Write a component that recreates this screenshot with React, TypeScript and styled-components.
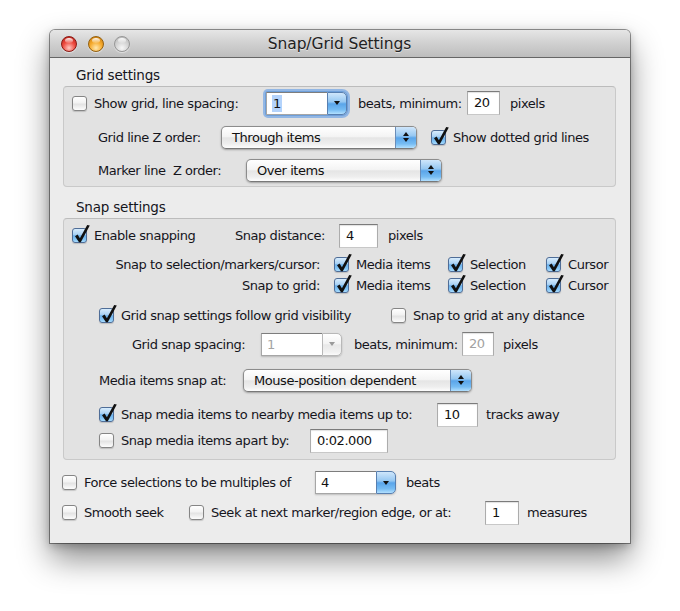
import React from 'react';
import styled, { createGlobalStyle, css } from 'styled-components';

const Global = createGlobalStyle`
  html, body { margin: 0; padding: 0; background: #ffffff; }
  body {
    font-family: "DejaVu Sans", "Liberation Sans", sans-serif;
    font-size: 13px;
    letter-spacing: -0.45px;
    color: #15151c;
  }
  * { box-sizing: border-box; }
`;

const Page = styled.div`
  width: 680px;
  height: 611px;
  padding: 30px 0 0 50px;
`;

const Window = styled.div`
  width: 580px;
  height: 513px;
  background: #ececec;
  border-radius: 5px 5px 0 0;
  box-shadow: 0 0 0 1px rgba(0, 0, 0, 0.4), 0 16px 32px rgba(0, 0, 0, 0.45),
    0 3px 10px rgba(0, 0, 0, 0.25);
  display: flex;
  flex-direction: column;
`;

const TitleBar = styled.div`
  height: 28px;
  flex-shrink: 0;
  display: grid;
  grid-template-columns: 1fr auto 1fr;
  align-items: center;
  padding-left: 11px;
  border-radius: 5px 5px 0 0;
  background: linear-gradient(#e6e6e6 0%, #d2d2d2 45%, #bdbdbd 100%);
  border-bottom: 1px solid #666666;
`;

const Lights = styled.div`
  display: flex;
  gap: 10.5px;
  align-items: center;
`;

const lightColors = {
  close: ['#ffc9c2', '#ee4b40', '#b01b12', '#8a1a14'],
  min: ['#ffe8b0', '#f6aa2c', '#c47508', '#94600f'],
  zoom: ['#f7f7f7', '#d4d4d4', '#b4b4b4', '#979797'],
};

const Light = styled.span<{ $kind: 'close' | 'min' | 'zoom' }>`
  position: relative;
  width: 16px;
  height: 16px;
  border-radius: 50%;
  ${({ $kind }) => {
    const c = lightColors[$kind];
    return css`
      background: radial-gradient(circle at 50% 78%, ${c[0]} 0%, ${c[1]} 48%, ${c[2]} 100%);
      border: 1px solid ${c[3]};
    `;
  }}
  box-shadow: 0 1px 1px rgba(255, 255, 255, 0.5);
  &::after {
    content: '';
    position: absolute;
    top: 1px;
    left: 3px;
    width: 8px;
    height: 5px;
    border-radius: 50%;
    background: linear-gradient(rgba(255, 255, 255, 0.95), rgba(255, 255, 255, 0.15));
  }
`;

const Title = styled.div`
  font-size: 15.5px;
  letter-spacing: -0.1px;
  color: #222222;
  text-shadow: 0 1px 0 rgba(255, 255, 255, 0.5);
  padding-right: 12px;
`;

const Group = styled.div`
  margin: 0 14px 0 13px;
`;

const GroupTitle = styled.div<{ $mt: number }>`
  margin-top: ${({ $mt }) => $mt}px;
  margin-bottom: 2px;
  padding-left: 13px;
  height: 18px;
  line-height: 18px;
  font-size: 13.5px;
  letter-spacing: -0.2px;
`;

const Box = styled.div<{ $h: number }>`
  height: ${({ $h }) => $h}px;
  background: #e2e2e2;
  border: 1px solid #c9c9c9;
  border-top-color: #bcbcbc;
  border-radius: 4px;
  display: flex;
  flex-direction: column;
`;

const Row = styled.div<{ $h: number; $mt: number; $pl: number }>`
  display: flex;
  align-items: center;
  flex-shrink: 0;
  height: ${({ $h }) => $h}px;
  margin-top: ${({ $mt }) => $mt}px;
  padding-left: ${({ $pl }) => $pl}px;
  white-space: pre;
`;

const Cell = styled.div<{ $w?: number; $ml?: number; $right?: boolean }>`
  display: flex;
  align-items: center;
  flex-shrink: 0;
  ${({ $w }) => ($w ? `width: ${$w}px;` : '')}
  margin-left: ${({ $ml }) => $ml ?? 0}px;
  justify-content: ${({ $right }) => ($right ? 'flex-end' : 'flex-start')};
`;

const Text = styled.span<{ $ml?: number }>`
  margin-left: ${({ $ml }) => $ml ?? 0}px;
  white-space: pre;
`;

/* ---------- checkbox ---------- */

const BoxMark = styled.span<{ $on: boolean }>`
  position: relative;
  flex-shrink: 0;
  width: 15px;
  height: 15px;
  border-radius: 3px;
  box-shadow: 0 1px 1px rgba(0, 0, 0, 0.16);
  ${({ $on }) =>
    $on
      ? css`
          border: 1px solid #4f6d97;
          background: linear-gradient(#d7ecfd 0%, #aad2f4 42%, #6cb1ec 52%, #83c5f6 80%, #a9dcfd 100%);
        `
      : css`
          border: 1px solid #858585;
          background: linear-gradient(#ffffff 0%, #f2f2f2 45%, #e3e3e3 55%, #f4f4f4 85%, #fcfcfc 100%);
        `}
`;

const Tick = styled.svg`
  position: absolute;
  left: 0;
  top: -5px;
  overflow: visible;
`;

const CheckLabel = styled.span`
  margin-left: 7px;
  white-space: pre;
`;

function Check({ on, label }: { on?: boolean; label?: string }) {
  return (
    <>
      <BoxMark $on={!!on}>
        {on && (
          <Tick width="17" height="19" viewBox="0 0 17 19">
            <path d="M2 12.2 L4.6 10.4 L6.9 14.2 L14.2 1 L16.8 1.6 L7.8 18.3 L6 18.3 Z" fill="#101010" />
          </Tick>
        )}
      </BoxMark>
      {label && <CheckLabel>{label}</CheckLabel>}
    </>
  );
}

/* ---------- text field ---------- */

const FieldBox = styled.div<{ $w: number; $disabled?: boolean }>`
  width: ${({ $w }) => $w}px;
  height: 24px;
  flex-shrink: 0;
  background: #ffffff;
  border: 1px solid #acacac;
  border-top-color: #7b7b7b;
  border-bottom-color: #c8c8c8;
  box-shadow: inset 0 1px 1px rgba(0, 0, 0, 0.12);
  padding-left: 6px;
  line-height: 22px;
  color: ${({ $disabled }) => ($disabled ? '#a2a2a2' : '#111')};
`;

/* ---------- popup button ---------- */

const PopupBox = styled.div<{ $w: number }>`
  width: ${({ $w }) => $w}px;
  height: 23px;
  flex-shrink: 0;
  display: flex;
  border: 1px solid #8c8c8c;
  border-bottom-color: #787878;
  border-radius: 5px;
  overflow: hidden;
  box-shadow: 0 1px 2px rgba(0, 0, 0, 0.3);
  background: linear-gradient(#ffffff 0%, #f4f4f4 45%, #e5e5e5 52%, #eeeeee 80%, #fdfdfd 100%);
`;

const PopupText = styled.div`
  flex: 1;
  padding-left: 10px;
  line-height: 21px;
  color: #111;
`;

const BlueCap = styled.div<{ $w: number; $grey?: boolean }>`
  width: ${({ $w }) => $w}px;
  flex-shrink: 0;
  display: flex;
  flex-direction: column;
  align-items: center;
  justify-content: center;
  gap: 2px;
  ${({ $grey }) =>
    $grey
      ? css`
          border-left: 1px solid #c2c2c2;
          background: linear-gradient(#ffffff 0%, #f4f4f4 45%, #e8e8e8 52%, #f1f1f1 85%, #fbfbfb 100%);
        `
      : css`
          border-left: 1px solid #6a8db8;
          background: linear-gradient(#cfe6fb 0%, #96c8f2 42%, #5aa5ea 52%, #76bcf3 80%, #b2e0ff 100%);
        `}
`;

const Arrow = styled.span<{ $up?: boolean; $grey?: boolean }>`
  width: 0;
  height: 0;
  border-left: 3.5px solid transparent;
  border-right: 3.5px solid transparent;
  ${({ $up, $grey }) =>
    $up
      ? `border-bottom: 4px solid ${$grey ? '#9a9a9a' : '#111'};`
      : `border-top: 4px solid ${$grey ? '#9a9a9a' : '#111'};`}
`;

function Popup({ w, value }: { w: number; value: string }) {
  return (
    <PopupBox $w={w}>
      <PopupText>{value}</PopupText>
      <BlueCap $w={21}>
        <Arrow $up />
        <Arrow />
      </BlueCap>
    </PopupBox>
  );
}

/* ---------- combo box ---------- */

const ComboBox = styled.div<{ $w: number; $focus?: boolean }>`
  width: ${({ $w }) => $w}px;
  height: 23px;
  flex-shrink: 0;
  display: flex;
  border-radius: 0 5px 5px 0;
  ${({ $focus }) =>
    $focus
      ? css`
          box-shadow: 0 0 0 1px #6e9fd9, 0 0 0 3px rgba(120, 168, 228, 0.75);
          border-radius: 2px 5px 5px 2px;
        `
      : css`
          box-shadow: 0 1px 2px rgba(0, 0, 0, 0.2);
        `}
`;

const ComboField = styled.div<{ $disabled?: boolean }>`
  flex: 1;
  background: #ffffff;
  border: 1px solid #a6a6a6;
  border-top-color: #7d7d7d;
  border-right: none;
  padding-left: 5px;
  line-height: 21px;
  color: ${({ $disabled }) => ($disabled ? '#a4a4a4' : '#111')};
`;

const Selected = styled.span`
  background: #b4d3fb;
  padding: 1px 1px;
`;

const ComboCap = styled(BlueCap)`
  border: 1px solid ${({ $grey }) => ($grey ? '#b8b8b8' : '#587fb0')};
  border-radius: 0 5px 5px 0;
`;

function Combo({ w, value, focus, disabled }: { w: number; value: string; focus?: boolean; disabled?: boolean }) {
  return (
    <ComboBox $w={w} $focus={focus}>
      <ComboField $disabled={disabled}>{focus ? <Selected>{value}</Selected> : value}</ComboField>
      <ComboCap $w={20} $grey={disabled}>
        <Arrow $grey={disabled} />
      </ComboCap>
    </ComboBox>
  );
}

/* ---------- page ---------- */

export default function App() {
  return (
    <>
      <Global />
      <Page>
        <Window>
          <TitleBar>
            <Lights>
              <Light $kind="close" />
              <Light $kind="min" />
              <Light $kind="zoom" />
            </Lights>
            <Title>Snap/Grid Settings</Title>
            <div />
          </TitleBar>

          <Group>
            <GroupTitle $mt={8}>Grid settings</GroupTitle>
            <Box $h={101}>
              <Row $h={26} $mt={3} $pl={8}>
                <Cell $w={194}>
                  <Check label="Show grid, line spacing:" />
                </Cell>
                <Combo w={81} value="1" focus />
                <Cell $w={109} $ml={11}>beats, minimum:</Cell>
                <FieldBox $w={33}>20</FieldBox>
                <Text $ml={10}>pixels</Text>
              </Row>
              <Row $h={26} $mt={8} $pl={34}>
                <Cell $w={123}>Grid line Z order:</Cell>
                <Popup w={196} value="Through items" />
                <Cell $ml={14}>
                  <Check on label="Show dotted grid lines" />
                </Cell>
              </Row>
              <Row $h={26} $mt={7} $pl={34}>
                <Cell $w={148}>Marker line  Z order:</Cell>
                <Popup w={196} value="Over items" />
              </Row>
            </Box>

            <GroupTitle $mt={11}>Snap settings</GroupTitle>
            <Box $h={242}>
              <Row $h={27} $mt={3} $pl={8}>
                <Cell $w={163}>
                  <Check on label="Enable snapping" />
                </Cell>
                <Cell $w={104}>Snap distance:</Cell>
                <FieldBox $w={39}>4</FieldBox>
                <Text $ml={10}>pixels</Text>
              </Row>
              <Row $h={20} $mt={5} $pl={0}>
                <Cell $w={256} $right>Snap to selection/markers/cursor:</Cell>
                <Cell $w={114} $ml={14}>
                  <Check on label="Media items" />
                </Cell>
                <Cell $w={98}>
                  <Check on label="Selection" />
                </Cell>
                <Cell>
                  <Check on label="Cursor" />
                </Cell>
              </Row>
              <Row $h={20} $mt={1} $pl={0}>
                <Cell $w={256} $right>Snap to grid:</Cell>
                <Cell $w={114} $ml={14}>
                  <Check on label="Media items" />
                </Cell>
                <Cell $w={98}>
                  <Check on label="Selection" />
                </Cell>
                <Cell>
                  <Check on label="Cursor" />
                </Cell>
              </Row>
              <Row $h={22} $mt={9} $pl={35}>
                <Cell $w={292}>
                  <Check on label="Grid snap settings follow grid visibility" />
                </Cell>
                <Cell>
                  <Check label="Snap to grid at any distance" />
                </Cell>
              </Row>
              <Row $h={24} $mt={6} $pl={68}>
                <Cell $w={129}>Grid snap spacing:</Cell>
                <Combo w={81} value="1" disabled />
                <Cell $w={108} $ml={12}>beats, minimum:</Cell>
                <FieldBox $w={32} $disabled>20</FieldBox>
                <Text $ml={9}>pixels</Text>
              </Row>
              <Row $h={26} $mt={11} $pl={35}>
                <Cell $w={144}>Media items snap at:</Cell>
                <Popup w={229} value="Mouse-position dependent" />
              </Row>
              <Row $h={25} $mt={9} $pl={35}>
                <Cell $w={338}>
                  <Check on label="Snap media items to nearby media items up to:" />
                </Cell>
                <FieldBox $w={41}>10</FieldBox>
                <Text $ml={8}>tracks away</Text>
              </Row>
              <Row $h={25} $mt={1} $pl={35}>
                <Cell $w={211}>
                  <Check label="Snap media items apart by:" />
                </Cell>
                <FieldBox $w={78}>0:02.000</FieldBox>
              </Row>
            </Box>
          </Group>

          <Row $h={25} $mt={10} $pl={12}>
            <Cell $w={253}>
              <Check label="Force selections to be multiples of" />
            </Cell>
            <Combo w={81} value="4" />
            <Text $ml={10}>beats</Text>
          </Row>
          <Row $h={25} $mt={5} $pl={12}>
            <Cell $w={127}>
              <Check label="Smooth seek" />
            </Cell>
            <Cell $w={296}>
              <Check label="Seek at next marker/region edge, or at:" />
            </Cell>
            <FieldBox $w={34}>1</FieldBox>
            <Text $ml={8}>measures</Text>
          </Row>
        </Window>
      </Page>
    </>
  );
}
